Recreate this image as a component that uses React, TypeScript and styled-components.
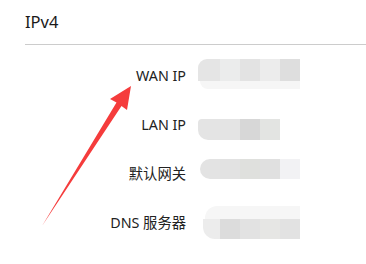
import React from "react";
import styled, { createGlobalStyle } from "styled-components";

const Global = createGlobalStyle`
  html, body { margin: 0; padding: 0; background: #fff; }
  body { font-family: "Noto Sans", "Noto Sans CJK SC", sans-serif; color: #222; }
`;

const Page = styled.div`
  position: relative;
  width: 366px;
  height: 264px;
  overflow: hidden;
  background: #fff;
`;

const Header = styled.div`
  margin-left: 25px;
  height: 45px;
  border-bottom: 1px solid #cccccc;
  display: flex;
  align-items: flex-end;
  box-sizing: border-box;
  padding-bottom: 12px;
`;

const Title = styled.div`
  font-size: 16.5px;
  line-height: 20px;
  color: #1a1a1a;
`;

const Rows = styled.div`
  padding-top: 6px;
  display: flex;
  flex-direction: column;
`;

const Row = styled.div`
  height: 49px;
  display: grid;
  grid-template-columns: 186px 1fr;
  column-gap: 12px;
`;

const Label = styled.div`
  align-self: center;
  text-align: right;
  font-size: 14.3px;
  line-height: 20px;
  color: #222;
  white-space: nowrap;
`;

const Blur = styled.div<{ $top: number }>`
  margin-top: ${(p) => p.$top}px;
  align-self: start;
  display: flex;
  flex-direction: column;
`;

const Strip = styled.div<{ $h: number; $indent?: number; $radius?: string }>`
  display: flex;
  height: ${(p) => p.$h}px;
  margin-left: ${(p) => p.$indent ?? 0}px;
  border-radius: ${(p) => p.$radius ?? "0"};
  overflow: hidden;
`;

const Cell = styled.div<{ $w: number; $c: string }>`
  width: ${(p) => p.$w}px;
  background: ${(p) => p.$c};
`;

type StripDef = { h: number; indent?: number; radius?: string; cells: [number, string][] };

const values: { label: string; top: number; strips: StripDef[] }[] = [
  {
    label: "WAN IP",
    top: 8,
    strips: [
      {
        h: 22,
        radius: "9px 0 0 0",
        cells: [
          [22, "#e5e5e5"],
          [20, "#ebecec"],
          [20, "#e3e3e3"],
          [20, "#ececec"],
          [20, "#dedede"],
        ],
      },
      { h: 8, indent: 2, radius: "0 0 6px 8px", cells: [[100, "#f6f6f6"]] },
    ],
  },
  {
    label: "LAN IP",
    top: 19,
    strips: [
      {
        h: 21,
        radius: "4px 0 0 10px",
        cells: [
          [42, "#e4e4e4"],
          [20, "#d7d7d7"],
          [20, "#e3e4e2"],
        ],
      },
    ],
  },
  {
    label: "默认网关",
    top: 10,
    strips: [
      {
        h: 20,
        indent: 2,
        radius: "10px 0 0 10px",
        cells: [
          [20, "#e3e3e3"],
          [20, "#e2e2e2"],
          [20, "#dfe0dd"],
          [20, "#e0e0e0"],
          [20, "#f2f2f4"],
        ],
      },
    ],
  },
  {
    label: "DNS 服务器",
    top: 8,
    strips: [
      { h: 13, indent: 7, radius: "12px 0 0 0", cells: [[95, "#f6f6f6"]] },
      {
        h: 20,
        indent: 5,
        radius: "0 0 0 12px",
        cells: [
          [17, "#ececec"],
          [20, "#dcdcdc"],
          [20, "#e2e2e2"],
          [20, "#e6e6e4"],
          [20, "#e2e2e2"],
        ],
      },
    ],
  },
];

const ArrowLayer = styled.svg`
  position: absolute;
  left: 0;
  top: 0;
  pointer-events: none;
`;

export default function App() {
  return (
    <>
      <Global />
      <Page>
        <Header>
          <Title>IPv4</Title>
        </Header>
        <Rows>
          {values.map((v) => (
            <Row key={v.label}>
              <Label>{v.label}</Label>
              <Blur $top={v.top}>
                {v.strips.map((s, i) => (
                  <Strip key={i} $h={s.h} $indent={s.indent} $radius={s.radius}>
                    {s.cells.map(([w, c], j) => (
                      <Cell key={j} $w={w} $c={c} />
                    ))}
                  </Strip>
                ))}
              </Blur>
            </Row>
          ))}
        </Rows>
        <ArrowLayer width="366" height="264" viewBox="0 0 366 264">
          <polygon
            points="131,86 127,110 121.5,106 42,226 116.5,102.5 110,99"
            fill="#f53c3c"
          />
        </ArrowLayer>
      </Page>
    </>
  );
}
